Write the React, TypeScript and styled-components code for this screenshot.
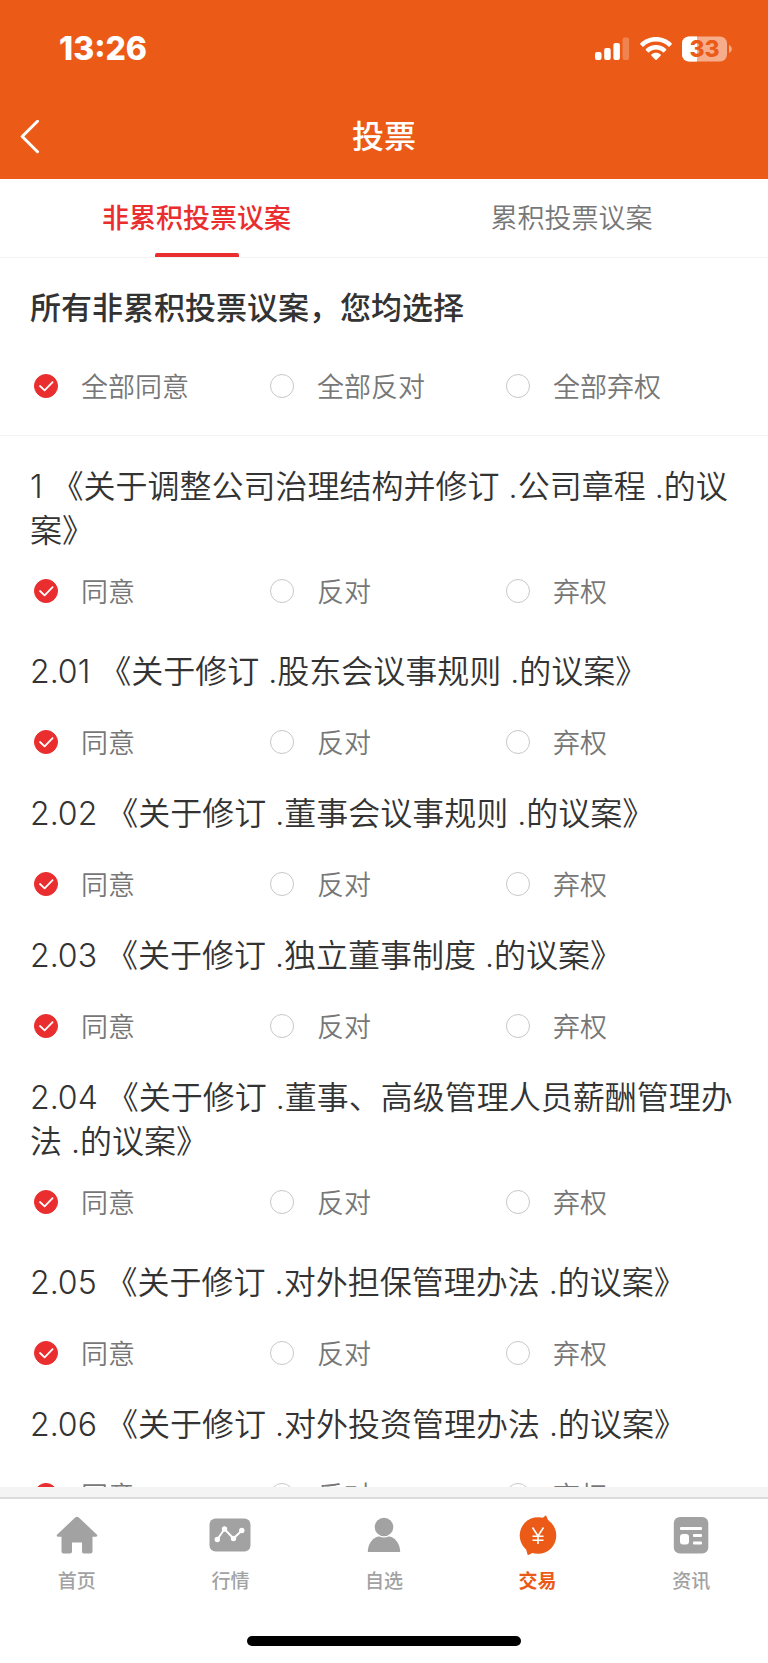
import React, { useState } from "react";
import styled, { createGlobalStyle } from "styled-components";

const GlobalStyle = createGlobalStyle`
  *, *::before, *::after { box-sizing: border-box; }
  body {
    margin: 0;
    background: #fff;
    font-family: "Noto Sans CJK SC", sans-serif;
    color: #333;
  }
  button, input { font: inherit; }
  h1, h2, h3 { font-family: Inter, "Noto Sans CJK SC", sans-serif; }
`;

const Screen = styled.div`
  display: flex;
  flex-direction: column;
  height: 100vh;
  background: #fff;
`;

const Header = styled.header`
  flex: none;
  background: #eb5b17;
  color: #fff;
`;

const StatusBar = styled.div`
  display: flex;
  align-items: center;
  justify-content: space-between;
  height: 98px;
  padding: 0 36px 0 59px;
`;

const Clock = styled.time`
  font: 800 32px/40px Inter, sans-serif;
`;

const StatusIcons = styled.div`
  display: flex;
  align-items: center;
  gap: 10px;
`;

const TitleBar = styled.div`
  display: grid;
  grid-template-columns: 60px 1fr 60px;
  align-items: center;
  height: 81px;
  padding-bottom: 4px;
`;

const BackButton = styled.button`
  display: flex;
  padding: 8px 20px;
  border: 0;
  background: none;
  color: inherit;
  cursor: pointer;
`;

const PageTitle = styled.h1`
  margin: 0;
  font-size: 32px;
  line-height: 44px;
  font-weight: 500;
  text-align: center;
`;

const Tabs = styled.div`
  flex: none;
  display: grid;
  grid-template-columns: 1fr 1fr;
  height: 79px;
  padding: 0 9px;
  border-bottom: 1px solid #f3f3f3;
`;

const Tab = styled.button<{ $active: boolean }>`
  display: flex;
  flex-direction: column;
  align-items: center;
  justify-content: space-between;
  padding: 18px 0 0;
  border: 0;
  background: none;
  font-size: 27px;
  line-height: 40px;
  font-weight: ${(p) => (p.$active ? 500 : 350)};
  color: ${(p) => (p.$active ? "#ea2d2e" : "#777")};
  cursor: pointer;

  &::after {
    content: "";
    width: 84px;
    height: 4px;
    border-radius: 2px 2px 0 0;
    background: ${(p) => (p.$active ? "#ea2d2e" : "transparent")};
  }
`;

const Content = styled.main`
  flex: 1;
  min-height: 0;
  overflow-y: auto;
  scrollbar-width: none;
`;

const Summary = styled.section`
  padding: 28px 30px 30px;
  border-bottom: 1px solid #f3f3f3;
`;

const SummaryTitle = styled.h2`
  margin: 0 0 37px;
  font-size: 31px;
  line-height: 44px;
  font-weight: 500;
`;

const Proposals = styled.div`
  padding: 29px 30px 0;
`;

const Proposal = styled.section<{ $twoLine: boolean }>`
  display: flex;
  flex-direction: column;
  gap: ${(p) => (p.$twoLine ? 19 : 29)}px;
  padding-bottom: ${(p) => (p.$twoLine ? 40 : 31)}px;
`;

const ProposalTitle = styled.h3`
  margin: 0;
  font-size: 32px;
  line-height: 44px;
  font-weight: 350;
`;

const OptionRow = styled.div`
  display: grid;
  grid-template-columns: repeat(3, 1fr);
`;

const Option = styled.label`
  display: flex;
  align-items: center;
  gap: 23px;
  height: 38px;
  padding-left: 4px;
  font-size: 27px;
  line-height: 38px;
  font-weight: 350;
  color: #777;
  cursor: pointer;
`;

const RadioMark = styled.span`
  display: grid;
  width: 24px;
  height: 24px;

  > * { grid-area: 1 / 1; }
  > svg { visibility: hidden; }
  > input:checked + svg { visibility: visible; }
`;

const RadioInput = styled.input`
  appearance: none;
  width: 24px;
  height: 24px;
  margin: 0;
  border: 1px solid #c8c8c8;
  border-radius: 50%;
  background: #fff;

  &:checked {
    border-color: #ea2d2e;
    background: #ea2d2e;
  }
`;

const Footer = styled.footer`
  flex: none;
  border-top: 10px solid #f4f4f4;
`;

const NavBar = styled.nav`
  display: grid;
  grid-template-columns: repeat(5, 1fr);
  padding-top: 14px;
  border-top: 2px solid #dcdcdc;
`;

const NavItem = styled.a<{ $active?: boolean }>`
  display: flex;
  flex-direction: column;
  align-items: center;
  gap: 11px;
  font-size: 19px;
  line-height: 28px;
  font-weight: ${(p) => (p.$active ? 700 : 500)};
  color: ${(p) => (p.$active ? "#eb5b17" : "#a2a2a2")};
  text-decoration: none;
`;

const HomeIndicator = styled.div`
  width: 274px;
  height: 10px;
  margin: 42px auto 17px;
  border-radius: 5px;
  background: #000;
`;

const SignalIcon = () => (
  <svg width="35" height="24" viewBox="0 0 35 24" fill="#fff" aria-hidden="true">
    <rect x="0" y="15" width="6.5" height="8" rx="2" />
    <rect x="9.2" y="11" width="6.5" height="12" rx="2" />
    <rect x="18.4" y="6" width="6.5" height="17" rx="2" />
    <rect x="27.6" y="0.5" width="6.5" height="22.5" rx="2" opacity="0.25" />
  </svg>
);

const WifiIcon = () => (
  <svg width="32" height="24" viewBox="0 0 32 24" fill="#fff" aria-hidden="true">
    <path d="M16 0C9.9 0 4.300 2.400.400 6.200c-.4.400-.4.800 0 1.200l2 2c.4.400.8.400 1.200 0C6.900 6.300 11.200 4.500 16 4.500s9.100 1.800 12.400 4.900c.4.400.8.400 1.200 0l2-2c.4-.4.4-.8 0-1.200C27.700 2.400 22.100 0 16 0z" />
    <path d="M16 8c-3.900 0-7.500 1.500-10.100 4-.4.400-.4.800 0 1.200l2.100 2c.4.400.8.400 1.200 0 1.800-1.700 4.200-2.700 6.800-2.700s5 1 6.800 2.700c.4.400.8.400 1.200 0l2.100-2c.4-.4.4-.8 0-1.200C23.500 9.500 19.900 8 16 8z" />
    <path d="M16 15.800c-1.800 0-3.400.6-4.600 1.700-.4.300-.4.800 0 1.200l4 4c.4.400.8.400 1.200 0l4-4c.4-.4.4-.9 0-1.200-1.200-1.100-2.800-1.700-4.600-1.700z" />
  </svg>
);

const BatteryIcon = () => (
  <svg width="50" height="26" viewBox="0 0 50 26" role="img" aria-label="33%">
    <defs>
      <clipPath id="battery-shell">
        <rect x="0" y="0.500" width="45" height="25" rx="7" />
      </clipPath>
    </defs>
    <g clipPath="url(#battery-shell)">
      <rect width="45" height="26" fill="#f6ad8b" />
      <rect width="15" height="26" fill="#fff" />
    </g>
    <path d="M47 9c1.800.8 2.800 2.300 2.800 4s-1 3.200-2.800 4z" fill="#f6ad8b" />
    <text x="22.500" y="21" textAnchor="middle" fontFamily="Inter, sans-serif" fontSize="23" fontWeight="800" fill="#eb5b17">33</text>
  </svg>
);

const BackIcon = () => (
  <svg width="20" height="34" viewBox="0 0 20 34" fill="none" stroke="#fff" strokeWidth="3" strokeLinecap="round" strokeLinejoin="round" aria-hidden="true">
    <path d="M17.500 1.300L2.200 16.500l15.300 15.200" />
  </svg>
);

const CheckIcon = () => (
  <svg width="24" height="24" viewBox="0 0 24 24" fill="none" stroke="#fff" strokeWidth="1.800" strokeLinecap="round" strokeLinejoin="round" aria-hidden="true">
    <path d="M6 12l4.600 4.400L18.600 8.200" />
  </svg>
);

const HomeIcon = () => (
  <svg width="42" height="42" viewBox="0 0 42 42" fill="currentColor" aria-hidden="true">
    <path d="M19.200 4.400c1.100-.9 2.500-.9 3.600 0L41 21.800c.7.800.2 1.900-.9 1.900H36.500V38.500c0 1.100-.8 2-2 2H28c-1.200 0-2-.9-2-2V29.500H16v9c0 1.100-.8 2-2 2H7.500c-1.200 0-2-.9-2-2V23.700H1.900c-1.100 0-1.600-1.100-.9-1.900z" />
  </svg>
);

const MarketIcon = () => (
  <svg width="42" height="42" viewBox="0 0 42 42" aria-hidden="true">
    <rect x="0.500" y="5.500" width="41" height="33" rx="6" fill="currentColor" />
    <path d="M8.300 26.500L15.500 16 24.500 25.500 32.800 17.500" fill="none" stroke="#fff" strokeWidth="2" />
    <g fill="#fff">
      <circle cx="8.300" cy="26.500" r="2.700" />
      <circle cx="15.500" cy="16" r="2.700" />
      <circle cx="24.500" cy="25.500" r="2.700" />
      <circle cx="32.800" cy="17.500" r="2.700" />
    </g>
  </svg>
);

const PersonIcon = () => (
  <svg width="42" height="42" viewBox="0 0 42 42" fill="currentColor" aria-hidden="true">
    <circle cx="21" cy="14" r="9.300" />
    <path d="M4.800 39c0-9 6-15.500 11.500-15.500 3 1.300 6.400 1.300 9.400 0C31.200 23.500 37.200 30 37.200 39z" />
  </svg>
);

const TradeIcon = () => (
  <svg width="42" height="42" viewBox="0 0 42 42" aria-hidden="true">
    <circle cx="21" cy="22.500" r="18.300" fill="currentColor" />
    <path d="M25.500 5L29 2.200l2.500 6z M9 36l1.800 6.300 6-3z" fill="currentColor" />
    <path d="M15.500 14.500L21 23l5.500-8.500M21 23v8M15.500 23.200h11M15.500 27.200h11" fill="none" stroke="#fff" strokeWidth="1.600" />
  </svg>
);

const NewsIcon = () => (
  <svg width="42" height="42" viewBox="0 0 42 42" aria-hidden="true">
    <rect x="3.800" y="4" width="34.500" height="36.500" rx="6" fill="currentColor" />
    <g fill="#fff">
      <rect x="10" y="14" width="22" height="3" rx="1" />
      <rect x="10" y="21" width="9" height="10.500" rx="3" />
      <rect x="23" y="21" width="9" height="3" rx="1" />
      <rect x="23" y="28.500" width="9" height="3" rx="1" />
    </g>
  </svg>
);

const proposals = [
  { id: "1", title: "《关于调整公司治理结构并修订 .公司章程 .的议案》", twoLine: true },
  { id: "2.01", title: "《关于修订 .股东会议事规则 .的议案》" },
  { id: "2.02", title: "《关于修订 .董事会议事规则 .的议案》" },
  { id: "2.03", title: "《关于修订 .独立董事制度 .的议案》" },
  { id: "2.04", title: "《关于修订 .董事、高级管理人员薪酬管理办法 .的议案》", twoLine: true },
  { id: "2.05", title: "《关于修订 .对外担保管理办法 .的议案》" },
  { id: "2.06", title: "《关于修订 .对外投资管理办法 .的议案》" },
];

const choices = ["同意", "反对", "弃权"];

const navItems = [
  { label: "首页", Icon: HomeIcon },
  { label: "行情", Icon: MarketIcon },
  { label: "自选", Icon: PersonIcon },
  { label: "交易", Icon: TradeIcon, active: true },
  { label: "资讯", Icon: NewsIcon },
];

type ChoiceGroupProps = {
  name: string;
  prefix?: string;
  value: string | null;
  onChange: (choice: string) => void;
};

const ChoiceGroup = ({ name, prefix = "", value, onChange }: ChoiceGroupProps) => (
  <OptionRow role="radiogroup" aria-labelledby={`title-${name}`}>
    {choices.map((choice) => (
      <Option key={choice}>
        <RadioMark>
          <RadioInput
            type="radio"
            name={name}
            checked={value === choice}
            onChange={() => onChange(choice)}
          />
          <CheckIcon />
        </RadioMark>
        {prefix + choice}
      </Option>
    ))}
  </OptionRow>
);

export default function App() {
  const [tab, setTab] = useState(0);
  const [votes, setVotes] = useState<Record<string, string>>(
    Object.fromEntries(proposals.map((p) => [p.id, "同意"]))
  );

  const unanimous = choices.find((c) => proposals.every((p) => votes[p.id] === c)) ?? null;
  const voteAll = (choice: string) =>
    setVotes(Object.fromEntries(proposals.map((p) => [p.id, choice])));

  return (
    <Screen>
      <GlobalStyle />
      <Header>
        <StatusBar>
          <Clock>13:26</Clock>
          <StatusIcons>
            <SignalIcon />
            <WifiIcon />
            <BatteryIcon />
          </StatusIcons>
        </StatusBar>
        <TitleBar>
          <BackButton aria-label="返回">
            <BackIcon />
          </BackButton>
          <PageTitle>投票</PageTitle>
        </TitleBar>
      </Header>
      <Tabs role="tablist">
        {["非累积投票议案", "累积投票议案"].map((label, i) => (
          <Tab key={label} role="tab" aria-selected={tab === i} $active={tab === i} onClick={() => setTab(i)}>
            {label}
          </Tab>
        ))}
      </Tabs>
      <Content>
        <Summary>
          <SummaryTitle id="title-all">所有非累积投票议案，您均选择</SummaryTitle>
          <ChoiceGroup name="all" prefix="全部" value={unanimous} onChange={voteAll} />
        </Summary>
        <Proposals>
          {proposals.map((p) => (
            <Proposal key={p.id} $twoLine={Boolean(p.twoLine)}>
              <ProposalTitle id={`title-${p.id}`}>{`${p.id} ${p.title}`}</ProposalTitle>
              <ChoiceGroup
                name={p.id}
                value={votes[p.id]}
                onChange={(choice) => setVotes({ ...votes, [p.id]: choice })}
              />
            </Proposal>
          ))}
        </Proposals>
      </Content>
      <Footer>
        <NavBar>
          {navItems.map(({ label, Icon, active }) => (
            <NavItem key={label} href="#" $active={active} aria-current={active ? "page" : undefined}>
              <Icon />
              {label}
            </NavItem>
          ))}
        </NavBar>
        <HomeIndicator />
      </Footer>
    </Screen>
  );
}
